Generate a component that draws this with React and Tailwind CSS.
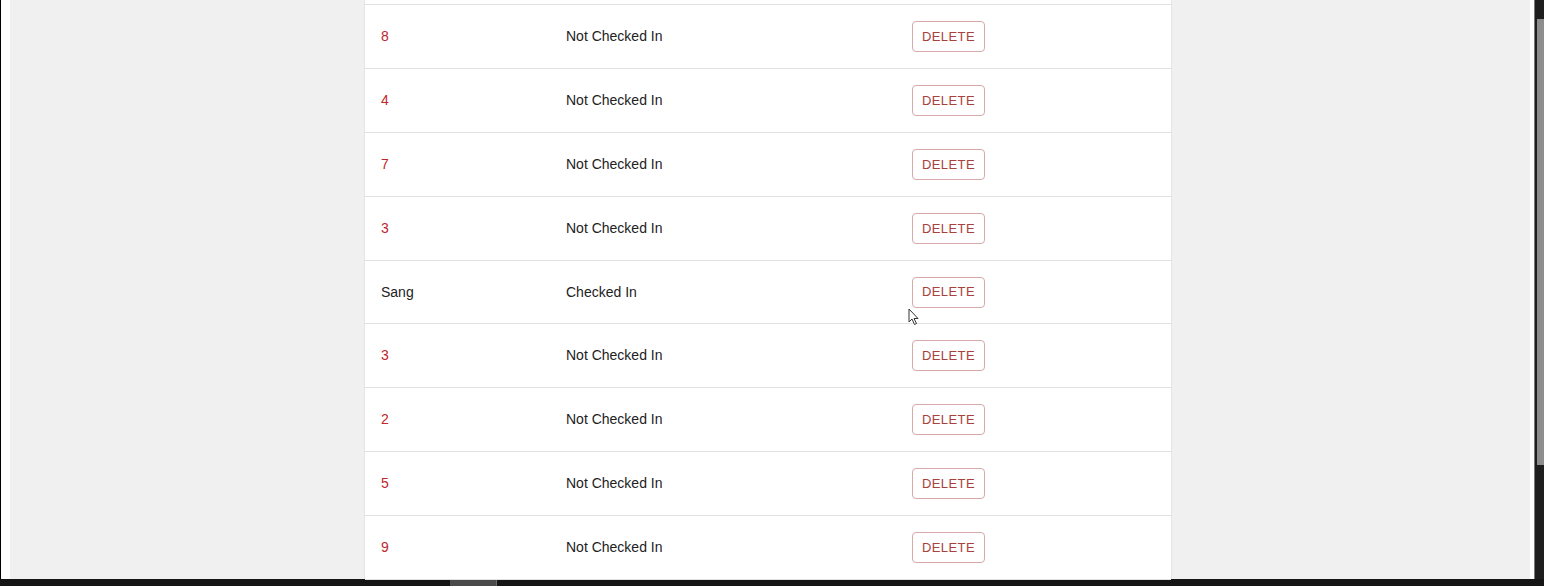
import React from "react";

const rows = [
  { name: "8", status: "Not Checked In" },
  { name: "4", status: "Not Checked In" },
  { name: "7", status: "Not Checked In" },
  { name: "3", status: "Not Checked In" },
  { name: "Sang", status: "Checked In", checked: true, short: true },
  { name: "3", status: "Not Checked In" },
  { name: "2", status: "Not Checked In" },
  { name: "5", status: "Not Checked In" },
  { name: "9", status: "Not Checked In" },
];

const Row = ({ row }) => (
  <div
    className={`flex items-center border-b border-[#e2e2e2] ${row.short ? "h-[63px]" : "h-[64px]"}`}
  >
    <div className={`w-[185px] pl-4 ${row.checked ? "text-[#222]" : "text-[#c0262c]"}`}>
      {row.name}
    </div>
    <div className="w-[346px] pl-4 text-[#222]">{row.status}</div>
    <div className="pl-4">
      <button className="w-[73px] h-[31px] rounded-[4px] border border-[#d8a9a9] text-[13px] tracking-[0.03em] text-[#a8403c] bg-white">
        DELETE
      </button>
    </div>
  </div>
);

export default function App() {
  return (
    <div
      className="w-[1544px] h-[586px] flex flex-col bg-[#1b1b1b] overflow-hidden text-[14px]"
      style={{ fontFamily: '"Liberation Sans", Arial, sans-serif' }}
    >
      <div className="flex h-[579px]">
        <div className="w-px bg-black" />
        <div className="w-[9px] bg-white" />
        <div className="flex-1 bg-[#f0f0f0] relative">
          <div className="ml-[354px] w-[808px] h-full bg-white border-l border-r border-[#e4e4e4]">
            <div className="h-[5px] border-b border-[#e2e2e2]" />
            {rows.map((r, i) => (
              <Row key={i} row={r} />
            ))}
          </div>
          {/* mouse cursor */}
          <svg
            className="absolute left-[898px] top-[308px]"
            width="12"
            height="18"
            viewBox="0 0 12 18"
          >
            <path
              d="M1 1 L1 14 L4 11 L6.5 16.5 L8.5 15.5 L6 10.5 L10 10.5 Z"
              fill="white"
              stroke="#333"
              strokeWidth="1"
              strokeLinejoin="round"
            />
          </svg>
        </div>
        <div className="w-[4px] bg-white" />
        <div className="w-[10px] bg-[#1e1e1e] flex">
          <div className="w-px bg-[#7a7a7a]" />
          <div className="w-[2px]" />
          <div className="flex-1 flex flex-col">
            <div className="h-[19px]" />
            <div className="h-[446px] bg-[#8d8d8d]" />
          </div>
        </div>
      </div>
      <div className="h-[7px] flex bg-[#151515]">
        <div className="w-[450px]" />
        <div className="w-[46px] bg-[#4a4a4a]" />
        <div className="w-px bg-[#6a6a6a]" />
      </div>
    </div>
  );
}
